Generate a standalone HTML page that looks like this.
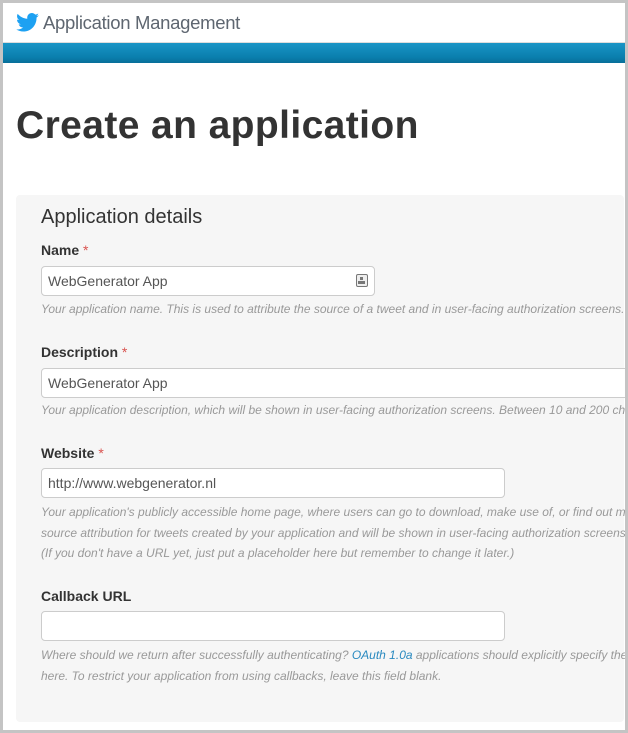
<!DOCTYPE html>
<html><head><meta charset="utf-8"><style>
*{box-sizing:border-box;margin:0;padding:0}
html,body{width:628px;height:733px;overflow:hidden;background:#c4c4c4}
.frame{position:absolute;left:3px;top:3px;width:622px;height:727px;background:#fff;overflow:hidden}
.hdr{position:absolute;left:0;top:0;width:622px;height:40px;background:#fff;border-bottom:1px solid #ddd}
.hdr span{position:absolute;left:40px;top:9px;font:18.5px "Liberation Sans",sans-serif;color:#5e6670;letter-spacing:-0.3px}
.bar{position:absolute;left:0;top:40px;width:622px;height:20px;background:linear-gradient(#1a95c6,#0a7fae 70%,#086f99)}
h1{position:absolute;left:13px;top:101px;font:bold 39px "Liberation Sans",sans-serif;color:#333;letter-spacing:0.4px}
.card{position:absolute;left:13px;top:192px;width:608px;height:527px;background:#f6f6f6;border-radius:4px}
.abs{position:absolute;font-family:"Liberation Sans",sans-serif}
.h2{left:25px;top:11px;font-size:20px;color:#333}
.lbl{left:25px;font-size:14px;font-weight:bold;color:#333}
.lbl i{color:#d9534f;font-style:normal;font-weight:normal}
.inp{left:25px;height:30px;background:#fff;border:1px solid #ccc;border-radius:4px;font-size:14px;color:#555;padding:6px 6px 0}
.help{left:25px;font-size:12px;font-style:italic;color:#999;line-height:20.5px;white-space:nowrap}
.help a{color:#2a8ac0;text-decoration:none}
</style></head><body>
<div class="frame">
<div class="hdr">
<svg style="position:absolute;left:13px;top:10px" width="23" height="19" viewBox="0 0 24 20"><path fill="#1da1f2" d="M24 2.4c-.9.4-1.8.6-2.8.8 1-.6 1.8-1.600 2.2-2.7-1 .6-2 1-3.1 1.2C19.3.7 18 0 16.6 0c-2.7 0-4.9 2.2-4.900 4.9 0 .4 0 .8.1 1.1C7.7 5.8 4.1 3.9 1.7.9c-.4.7-.7 1.6-.7 2.5 0 1.7.9 3.2 2.2 4.1-.8 0-1.6-.2-2.2-.6v.1c0 2.4 1.7 4.4 3.9 4.8-.4.1-.8.2-1.3.2-.3 0-.6 0-.9-.1.6 2 2.4 3.4 4.600 3.4-1.7 1.3-3.8 2.1-6.1 2.1-.4 0-.8 0-1.2-.1 2.2 1.4 4.8 2.2 7.5 2.2 9.1 0 14-7.5 14-14v-.6c1-.7 1.8-1.6 2.5-2.5z"/></svg>
<span>Application Management</span></div>
<div class="bar"></div>
<h1>Create an application</h1>
<div class="card">
<div class="abs h2">Application details</div>
<div class="abs lbl" style="top:47px">Name <i>*</i></div>
<div class="abs inp" style="top:71px;width:334px">WebGenerator App
<span style="position:absolute;right:6px;top:7px;width:12px;height:13px;border:1.5px solid #777;border-radius:2px;background:#eee"><span style="position:absolute;left:3px;top:2px;width:3px;height:3px;background:#777"></span><span style="position:absolute;left:1px;top:6px;width:7px;height:3px;background:#777"></span></span></div>
<div class="abs help" style="top:104px">Your application name. This is used to attribute the source of a tweet and in user-facing authorization screens. 32 characters max.</div>
<div class="abs lbl" style="top:149px">Description <i>*</i></div>
<div class="abs inp" style="top:173px;width:600px">WebGenerator App</div>
<div class="abs help" style="top:205px">Your application description, which will be shown in user-facing authorization screens. Between 10 and 200 characters max.</div>
<div class="abs lbl" style="top:250px">Website <i>*</i></div>
<div class="abs inp" style="top:273px;width:464px">http://www.webgenerator.nl</div>
<div class="abs help" style="top:307px">Your application's publicly accessible home page, where users can go to download, make use of, or find out more information about your application.<br>source attribution for tweets created by your application and will be shown in user-facing authorization screens.<br>(If you don't have a URL yet, just put a placeholder here but remember to change it later.)</div>
<div class="abs lbl" style="top:393px">Callback URL</div>
<div class="abs inp" style="top:416px;width:464px"></div>
<div class="abs help" style="top:450px">Where should we return after successfully authenticating? <a>OAuth 1.0a</a> applications should explicitly specify their callback URL<br>here. To restrict your application from using callbacks, leave this field blank.</div>
</div>
</div>
</body></html>
